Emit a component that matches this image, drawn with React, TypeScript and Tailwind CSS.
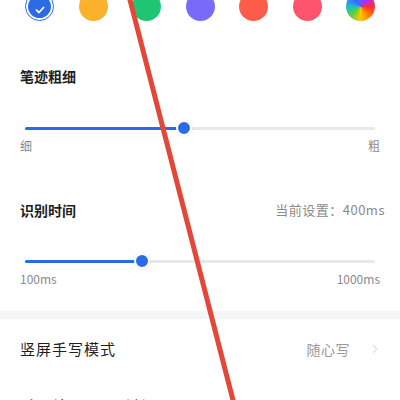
import { ChevronRight } from "lucide-react";

const colors = ["bg-[#fbb12b]", "bg-[#1ec573]", "bg-[#7a6af9]", "bg-[#fc5c48]", "bg-[#fc546d]"];

function Slider({ value }: { value: number }) {
  return (
    <div className="relative mx-[25px] h-4 flex items-center">
      <div className="h-[3px] w-full rounded-full bg-[#e8e8e8]" />
      <div
        className="absolute left-0 h-[3px] rounded-full bg-[#2c6be6]"
        style={{ width: `${value * 100}%` }}
      />
      <div
        className="absolute h-4 w-4 -translate-x-1/2 rounded-full border-2 border-white bg-[#2c6be6] shadow-[0_0_2px_rgba(0,0,0,0.15)]"
        style={{ left: `${value * 100}%` }}
      />
    </div>
  );
}

export default function App() {
  return (
    <div
      className="relative h-[400px] w-[400px] overflow-hidden bg-white"
      style={{ fontFamily: '"Noto Sans CJK SC", "Noto Sans", sans-serif' }}
    >
      {/* colour picker */}
      <div className="-mt-[8px] flex justify-between px-[25px]">
        <div className="flex h-[29px] w-[29px] items-center justify-center rounded-full border-[1.5px] border-[#2c6be6]">
          <div className="flex h-[23px] w-[23px] items-center justify-center rounded-full bg-[#2c6be6]">
            <svg width="12" height="12" viewBox="0 0 12 12" className="mt-[6px]">
              <path d="M2.5 6.2 5 8.5 9.5 3.5" fill="none" stroke="white" strokeWidth="1.8" strokeLinecap="round" strokeLinejoin="round" />
            </svg>
          </div>
        </div>
        {colors.map((c) => (
          <div key={c} className={`h-[29px] w-[29px] rounded-full ${c}`} />
        ))}
        <div className="h-[29px] w-[29px] rounded-full bg-[conic-gradient(#5a5cff,#b02bff,#ff2d3a,#ff7a00,#ffc800,#5cd03a,#18c0c8,#3a6aff,#5a5cff)]" />
      </div>

      {/* stroke width */}
      <div className="mt-[45px] px-5 text-[14px] font-bold leading-[20px] text-[#1f1f1f]">笔迹粗细</div>
      <div className="mt-[34px]">
        <Slider value={0.454} />
      </div>
      <div className="mt-[2px] flex justify-between px-5 text-[12px] leading-[16px] text-[#8a8a8a]">
        <span>细</span>
        <span>粗</span>
      </div>

      {/* recognition time */}
      <div className="mt-[46px] flex items-center justify-between pl-5 pr-[15px] leading-[20px]">
        <span className="text-[14px] font-bold text-[#1f1f1f]">识别时间</span>
        <span className="text-[13px] tracking-[0.5px] text-[#8a8a8a]">当前设置：400ms</span>
      </div>
      <div className="mt-[33px]">
        <Slider value={0.334} />
      </div>
      <div className="mt-[2px] flex justify-between px-5 text-[12px] leading-[16px] text-[#8a8a8a]">
        <span>100ms</span>
        <span>1000ms</span>
      </div>

      <div className="mt-[24px] h-[8px] bg-[#f4f5f7]" />

      {/* rows */}
      <div className="flex h-[60px] items-center justify-between px-5">
        <span className="text-[15px] tracking-[1px] text-[#1f1f1f]">竖屏手写模式</span>
        <div className="flex items-center gap-[18px]">
          <span className="text-[14px] tracking-[0.5px] text-[#999]">随心写</span>
          <ChevronRight className="-mr-[2px] h-[14px] w-[14px] text-[#c4c4c4]" strokeWidth={1.5} />
        </div>
      </div>
      <div className="flex h-[54px] items-center justify-between px-5">
        <span className="text-[15px] tracking-[1px] text-[#1f1f1f]">手写结果显示时长</span>
        <div className="flex items-center gap-[18px]">
          <span className="text-[14px] tracking-[0.5px] text-[#999]">仅在键盘上显示</span>
          <ChevronRight className="-mr-[2px] h-[14px] w-[14px] text-[#c4c4c4]" strokeWidth={1.5} />
        </div>
      </div>

      {/* handwriting stroke over the page */}
      <svg className="pointer-events-none absolute inset-0" width="400" height="400">
        <line x1="129" y1="-4" x2="234" y2="404" stroke="#e2473a" strokeWidth="5" strokeLinecap="round" />
      </svg>
    </div>
  );
}
